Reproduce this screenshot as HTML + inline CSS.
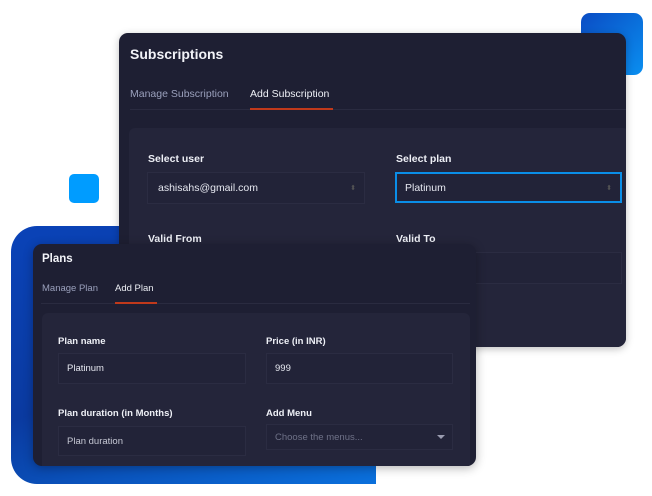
<!DOCTYPE html>
<html><head><meta charset="utf-8"><style>
*{margin:0;padding:0;box-sizing:border-box}
body{width:652px;height:496px;background:#fff;position:relative;overflow:hidden;font-family:"Liberation Sans",sans-serif;color:#e8e9f0}
.a{position:absolute}
.lbl{position:absolute;font-size:10.5px;font-weight:bold;color:#eef0f6}
.inp{position:absolute;background:#222338;border:1px solid #2b2c42;font-size:10.5px;color:#e6e8f0;padding-left:10px;display:flex;align-items:center}
</style></head><body>
<div class="a" style="left:581px;top:13px;width:62px;height:62px;border-radius:9px;background:linear-gradient(135deg,#0a4cc4,#0a8ff0)"></div>
<div class="a" style="left:69px;top:174px;width:30px;height:29px;border-radius:5px;background:#009cff"></div>
<div class="a" style="left:11px;top:226px;width:365px;height:258px;border-radius:26px 0 0 26px;background:linear-gradient(160deg,#0a43b8,#0a3aa0 50%,#0a70dc)"></div>

<div class="a" style="left:119px;top:33px;width:507px;height:314px;border-radius:9px;background:#1e1f33;box-shadow:0 2px 8px rgba(0,0,0,.25);overflow:hidden">
  <div class="a" style="left:11px;top:13px;font-size:14px;font-weight:bold;color:#f2f3f8">Subscriptions</div>
  <div class="a" style="left:11px;top:55px;font-size:10.5px;color:#9aa0bc">Manage Subscription</div>
  <div class="a" style="left:131px;top:55px;font-size:10.5px;color:#eef0f6">Add Subscription</div>
  <div class="a" style="left:11px;top:76px;width:496px;height:1px;background:#2a2b40"></div>
  <div class="a" style="left:131px;top:75px;width:83px;height:2px;background:#c0391b"></div>
  <div class="a" style="left:10px;top:95px;width:500px;height:240px;border-radius:6px;background:#24253a">
    <div class="lbl" style="left:19px;top:25px">Select user</div>
    <div class="inp" style="left:18px;top:44px;width:218px;height:32px">ashisahs@gmail.com<span style="position:absolute;right:8px;color:#555;font-size:7px">⬍</span></div>
    <div class="lbl" style="left:267px;top:25px">Select plan</div>
    <div class="inp" style="left:266px;top:44px;width:227px;height:31px;border:2px solid #0a8ee8;padding-left:8px">Platinum<span style="position:absolute;right:8px;color:#555;font-size:7px">⬍</span></div>
    <div class="lbl" style="left:19px;top:105px">Valid From</div>
    <div class="lbl" style="left:267px;top:105px">Valid To</div>
    <div class="inp" style="left:266px;top:124px;width:227px;height:32px"></div>
  </div>
</div>

<div class="a" style="left:33px;top:244px;width:443px;height:222px;border-radius:9px;background:#1e1f33;box-shadow:0 2px 10px rgba(0,0,0,.3);overflow:hidden">
  <div class="a" style="left:9px;top:9px;font-size:11.5px;font-weight:bold;color:#f2f3f8">Plans</div>
  <div class="a" style="left:9px;top:39px;font-size:9.5px;color:#9aa0bc">Manage Plan</div>
  <div class="a" style="left:82px;top:39px;font-size:9.5px;color:#eef0f6">Add Plan</div>
  <div class="a" style="left:8px;top:59px;width:429px;height:1px;background:#2a2b40"></div>
  <div class="a" style="left:82px;top:58px;width:42px;height:2px;background:#c0391b"></div>
  <div class="a" style="left:9px;top:69px;width:428px;height:160px;border-radius:6px;background:#24253a">
    <div class="lbl" style="left:16px;top:23px;font-size:9.5px">Plan name</div>
    <div class="inp" style="left:16px;top:40px;width:188px;height:31px;font-size:9.5px;padding-left:8px">Platinum</div>
    <div class="lbl" style="left:224px;top:23px;font-size:9.5px">Price (in INR)</div>
    <div class="inp" style="left:224px;top:40px;width:187px;height:31px;font-size:9.5px;padding-left:8px">999</div>
    <div class="lbl" style="left:16px;top:95px;font-size:9.5px">Plan duration (in Months)</div>
    <div class="inp" style="left:16px;top:113px;width:188px;height:30px;font-size:9.5px;padding-left:8px;color:#c6c8d4">Plan duration</div>
    <div class="lbl" style="left:224px;top:95px;font-size:9.5px">Add Menu</div>
    <div class="inp" style="left:224px;top:111px;width:187px;height:26px;font-size:9.5px;padding-left:8px;color:#6f7288">Choose the menus...<span style="position:absolute;right:7px;top:10px;width:0;height:0;border-left:4px solid transparent;border-right:4px solid transparent;border-top:4px solid #9a9cb0"></span></div>
  </div>
</div>
</body></html>
